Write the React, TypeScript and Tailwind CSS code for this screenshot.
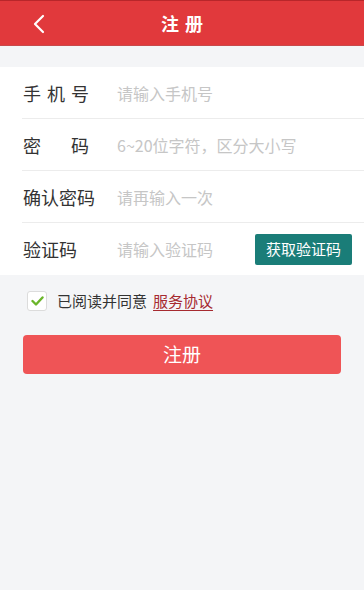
import React from "react";

const font = { fontFamily: '"Noto Sans CJK SC", "Noto Sans", sans-serif' };

function Row({ label, placeholder, last, children }: { label: React.ReactNode; placeholder: string; last?: boolean; children?: React.ReactNode }) {
  return (
    <div className={`ml-[22px] flex h-[52px] items-center ${last ? "" : "border-b border-[#ececec]"}`}>
      <div className="w-[95px] shrink-0 pl-[1px] text-[18px] leading-[24px] text-[#333333]">{label}</div>
      <div className="flex-1 text-[16px] leading-[22px] text-[#c6c6c6]">{placeholder}</div>
      {children}
    </div>
  );
}

export default function App() {
  return (
    <div className="flex h-[590px] w-[364px] flex-col bg-[#f4f5f7]" style={font}>
      <div className="relative flex h-[46px] items-center justify-center border-t border-t-[#b8262a] border-b border-b-[#c8494b] bg-[#e1393c]">
        <svg className="absolute left-[32px] top-[13px]" width="14" height="20" viewBox="0 0 14 20" fill="none">
          <path d="M11 2 L3 10 L11 18" stroke="#fff" strokeWidth="2.2" strokeLinecap="round" strokeLinejoin="round" />
        </svg>
        <div className="pl-[6px] text-[18px] font-bold leading-[24px] tracking-[6px] text-white">注册</div>
      </div>
      <div className="mt-[21px] bg-white">
        <Row label={<span className="tracking-[6px]">手机号</span>} placeholder="请输入手机号" />
        <Row label={<span className="flex w-[66px] justify-between"><span>密</span><span>码</span></span>} placeholder="6~20位字符，区分大小写" />
        <Row label="确认密码" placeholder="请再输入一次" />
        <Row label="验证码" placeholder="请输入验证码" last>
          <button className="mr-[12px] flex h-[31px] w-[97px] items-center justify-center rounded-[2px] bg-[#1a7d78] text-[15px] text-white">
            获取验证码
          </button>
        </Row>
      </div>
      <div className="mt-[15px] flex items-center pl-[27px]">
        <div className="flex h-[20px] w-[20px] items-center justify-center rounded-[3px] border border-[#dcdcdc] bg-white">
          <svg width="13" height="10" viewBox="0 0 13 10" fill="none">
            <path d="M1.5 5 L5 8.5 L11.5 1.5" stroke="#6ab52a" strokeWidth="2.4" strokeLinecap="round" strokeLinejoin="round" />
          </svg>
        </div>
        <span className="ml-[10px] text-[15px] text-[#333333]">已阅读并同意</span>
        <span className="ml-[6px] text-[15px] text-[#a62a30] underline underline-offset-[3px]">服务协议</span>
      </div>
      <div className="mt-[22px] px-[23px]">
        <button className="flex h-[39px] w-full items-center justify-center rounded-[4px] bg-[#ef5456] text-[19px] text-white">
          注册
        </button>
      </div>
    </div>
  );
}
